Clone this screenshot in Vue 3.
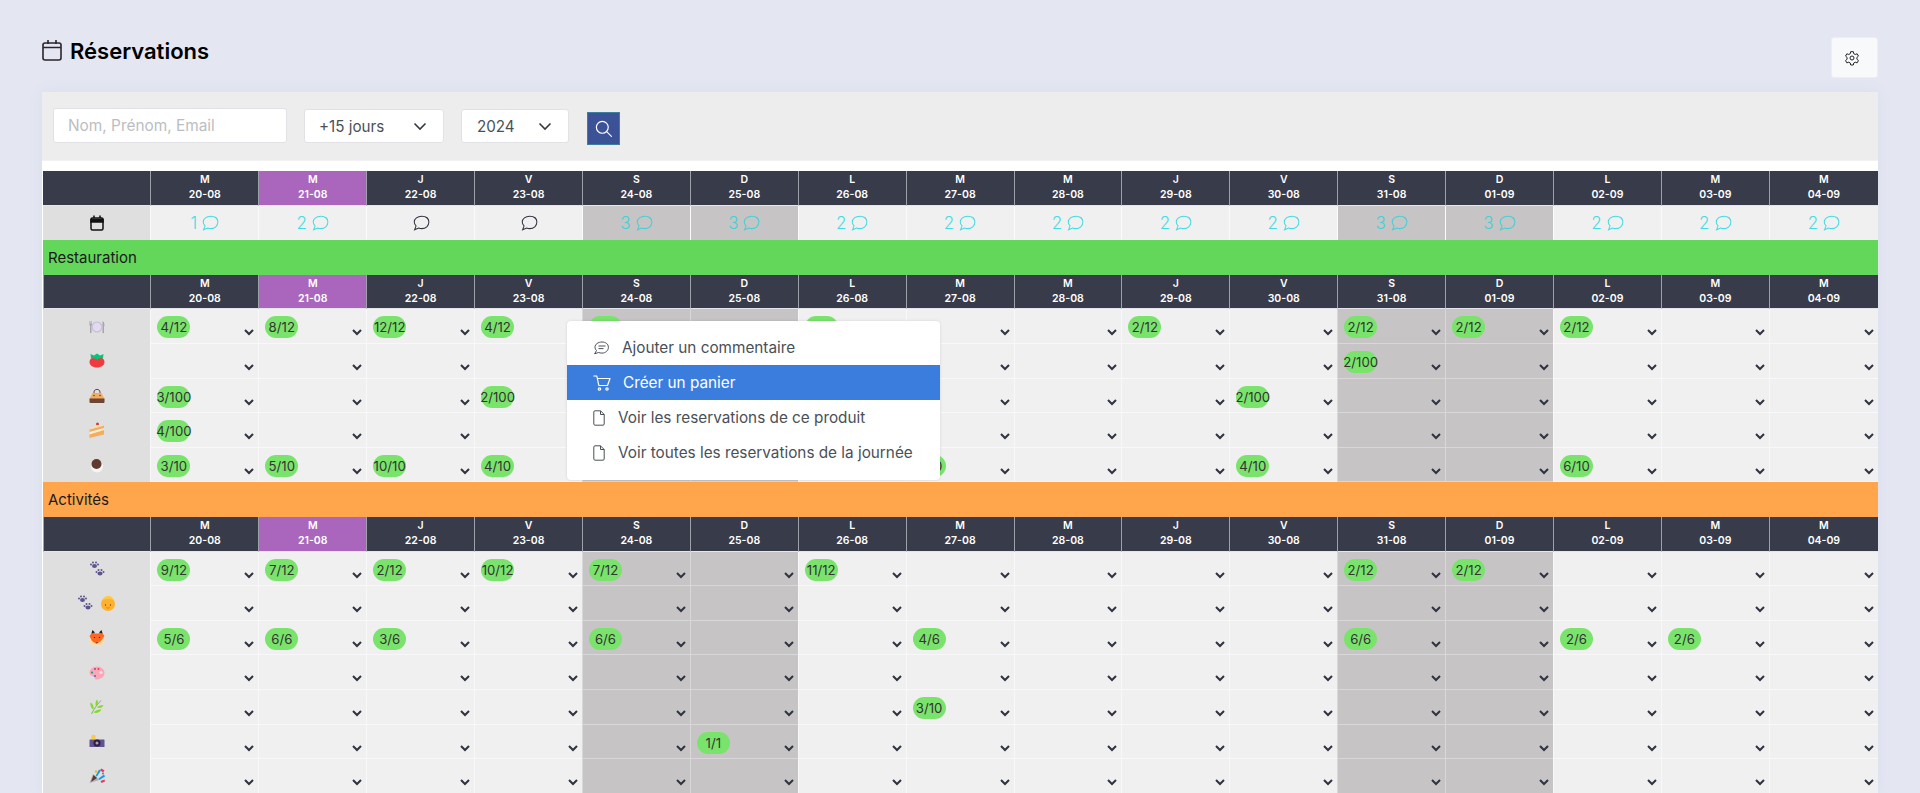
<template>
    <div class="page">
        <header class="page-head">
            <h1 class="page-title">
                <svg class="title-icon" viewBox="0 0 20 22" fill="none" stroke="#2b2528" stroke-width="1.6">
                    <rect x="1" y="4" width="18" height="17" rx="2" />
                    <path d="M1 8.500h18M6 1v4M14 1v4" />
                </svg>
                <span>Réservations</span>
            </h1>
            <button class="settings-btn">
                <svg viewBox="0 0 24 24" fill="none" stroke="#212529" stroke-width="1.500" stroke-linejoin="round">
                    <circle cx="12" cy="12" r="3" />
                    <path d="M10 2.500h4l.6 3 2.200 1.200 2.900-1 2 3.400-2.300 2v2.800l2.300 2-2 3.400-2.900-1-2.200 1.200-.6 3h-4l-.6-3-2.200-1.200-2.900 1-2-3.400 2.300-2v-2.800l-2.300-2 2-3.400 2.900 1 2.200-1.200z" />
                </svg>
            </button>
        </header>

        <section class="card">
            <div class="toolbar">
                <input class="search-input" type="text" placeholder="Nom, Prénom, Email" />
                <div class="fake-select range">
                    <span>+15 jours</span>
                    <svg viewBox="0 0 14 9" fill="none" stroke="#343a40" stroke-width="1.600"><path d="M1.500 1.500 7 7l5.500-5.500" /></svg>
                </div>
                <div class="fake-select year">
                    <span>2024</span>
                    <svg viewBox="0 0 14 9" fill="none" stroke="#343a40" stroke-width="1.600"><path d="M1.500 1.500 7 7l5.500-5.500" /></svg>
                </div>
                <button class="search-btn">
                    <svg viewBox="0 0 24 24" fill="none" stroke="#fff" stroke-width="1.500" stroke-linecap="round">
                        <circle cx="10.500" cy="10.500" r="7.500" />
                        <path d="m16 16 6 6" />
                    </svg>
                </button>
            </div>

            <div class="planning">
                <div class="head-cell"></div>
                <div v-for="d in days" :key="'top' + d.date" class="head-cell" :class="{ today: d.today }">
                    <span>{{ d.letter }}</span>
                    <span>{{ d.date }}</span>
                </div>

                <div class="label-cell">
                    <svg class="cal-icon" viewBox="0 0 14 16" fill="none" stroke="#111" stroke-width="1.500">
                        <rect x="1" y="3" width="12" height="12" rx="1.500" />
                        <path d="M1 4.500h12V7H1z" fill="#111" />
                        <path d="M4 .5V3M10 .5V3" />
                    </svg>
                </div>
                <div
                    v-for="(d, i) in days"
                    :key="'note' + d.date"
                    class="note-cell"
                    :class="{ weekend: d.weekend, filled: notes[i] }"
                >
                    <span v-if="notes[i]">{{ notes[i] }}</span>
                    <svg viewBox="0 0 16 14" fill="none" stroke="currentColor" stroke-width="0.9">
                        <path d="M8.600 1C4.900 1 2 3.300 2 6.200c0 1.300.6 2.500 1.600 3.400L2.300 13l3.600-1.500c.8.300 1.700.5 2.700.5 3.700 0 6.400-2.400 6.400-5.800S12.300 1 8.600 1z" />
                    </svg>
                </div>

                <template v-for="section in sections" :key="section.name">
                    <div class="section-title" :class="section.tone">{{ section.name }}</div>
                    <div class="head-cell"></div>
                    <div v-for="d in days" :key="section.name + d.date" class="head-cell" :class="{ today: d.today }">
                        <span>{{ d.letter }}</span>
                        <span>{{ d.date }}</span>
                    </div>

                    <template v-for="row in section.rows" :key="row.id">
                        <div class="label-cell">
                            <svg
                                v-for="icon in row.icons"
                                :key="icon"
                                class="emoji"
                                viewBox="0 0 32 32"
                                v-html="emojis[icon]"
                            ></svg>
                        </div>
                        <div
                            v-for="(d, i) in days"
                            :key="row.id + d.date"
                            class="slot"
                            :class="{ weekend: d.weekend }"
                        >
                            <span v-if="row.slots[i]" class="badge">{{ row.slots[i] }}</span>
                            <svg class="chevron" viewBox="0 0 10 7" fill="none" stroke="#2f3340" stroke-width="2">
                                <path d="m1 1 4 4 4-4" />
                            </svg>
                        </div>
                    </template>
                </template>
            </div>
        </section>

        <ul class="context-menu">
            <li class="menu-item comment">
                <svg viewBox="0 0 16 14" fill="none" stroke="#495057" stroke-width="1">
                    <path d="M9 1C5.200 1 2 3.200 2 6.200c0 1.300.6 2.400 1.500 3.300L1.600 12.800l3.900-1.300c1 .4 2.200.6 3.500.6 3.600 0 6.400-2.500 6.400-5.800S12.600 1 9 1z" />
                    <path d="M5.500 5h7M5.500 7.600h5" />
                </svg>
                Ajouter un commentaire
            </li>
            <li class="menu-item active">
                <svg viewBox="0 0 18 16" fill="none" stroke="#fff" stroke-width="1.200" stroke-linecap="round" stroke-linejoin="round">
                    <path d="M.8 1h3l2 9.500h8.700L17 3.500H4.400" />
                    <circle cx="6.500" cy="14" r="1.200" />
                    <circle cx="14" cy="14" r="1.200" />
                </svg>
                Créer un panier
            </li>
            <li class="menu-item file">
                <svg viewBox="0 0 12 16" fill="none" stroke="#495057" stroke-width="1" stroke-linejoin="round">
                    <path d="M7.500.8H2A1.300 1.300 0 0 0 .8 2v12c0 .7.600 1.200 1.200 1.200h8c.7 0 1.200-.5 1.200-1.200V4.500zM7.500.8v3.700h3.700" />
                </svg>
                Voir les reservations de ce produit
            </li>
            <li class="menu-item file">
                <svg viewBox="0 0 12 16" fill="none" stroke="#495057" stroke-width="1" stroke-linejoin="round">
                    <path d="M7.500.8H2A1.300 1.300 0 0 0 .8 2v12c0 .7.600 1.200 1.200 1.200h8c.7 0 1.200-.5 1.200-1.200V4.500zM7.500.8v3.700h3.700" />
                </svg>
                Voir toutes les reservations de la journée
            </li>
        </ul>
    </div>
</template>

<script setup>
const dayList = [
    ["M", "20-08"], ["M", "21-08"], ["J", "22-08"], ["V", "23-08"],
    ["S", "24-08"], ["D", "25-08"], ["L", "26-08"], ["M", "27-08"],
    ["M", "28-08"], ["J", "29-08"], ["V", "30-08"], ["S", "31-08"],
    ["D", "01-09"], ["L", "02-09"], ["M", "03-09"], ["M", "04-09"],
];
const days = dayList.map(([letter, date]) => ({
    letter,
    date,
    today: date === "21-08",
    weekend: letter === "S" || letter === "D",
}));

const notes = [1, 2, 0, 0, 3, 3, 2, 2, 2, 2, 2, 3, 3, 2, 2, 2];

// une case par jour, "" = pas de reservation
const sections = [
    {
        name: "Restauration",
        tone: "green",
        rows: [
            { id: "r1", icons: ["plate"], slots: ["4/12", "8/12", "12/12", "4/12", "9/12", "", "2/12", "", "", "2/12", "", "2/12", "2/12", "2/12", "", ""] },
            { id: "r2", icons: ["tomato"], slots: ["", "", "", "", "", "", "", "", "", "", "", "2/100", "", "", "", ""] },
            { id: "r3", icons: ["bag"], slots: ["3/100", "", "", "2/100", "", "", "", "", "", "", "2/100", "", "", "", "", ""] },
            { id: "r4", icons: ["cake"], slots: ["4/100", "", "", "", "", "", "", "", "", "", "", "", "", "", "", ""] },
            { id: "r5", icons: ["coffee"], slots: ["3/10", "5/10", "10/10", "4/10", "", "", "", "3/10", "", "", "4/10", "", "", "6/10", "", ""] },
        ],
    },
    {
        name: "Activités",
        tone: "orange",
        rows: [
            { id: "a1", icons: ["paws"], slots: ["9/12", "7/12", "2/12", "10/12", "7/12", "", "11/12", "", "", "", "", "2/12", "2/12", "", "", ""] },
            { id: "a2", icons: ["paws", "baby"], slots: Array(16).fill("") },
            { id: "a3", icons: ["fox"], slots: ["5/6", "6/6", "3/6", "", "6/6", "", "", "4/6", "", "", "", "6/6", "", "2/6", "2/6", ""] },
            { id: "a4", icons: ["palette"], slots: Array(16).fill("") },
            { id: "a5", icons: ["herb"], slots: ["", "", "", "", "", "", "", "3/10", "", "", "", "", "", "", "", ""] },
            { id: "a6", icons: ["camera"], slots: ["", "", "", "", "", "1/1", "", "", "", "", "", "", "", "", "", ""] },
            { id: "a7", icons: ["party"], slots: Array(16).fill("") },
        ],
    },
];

const emojis = {
    plate: '<path d="M1 4h1v5h1V4h1v5h1V4h1v8l-1 2v13a1.500 1.500 0 0 1-3 0V14l-1-2z" fill="#a8a4ae"/><path d="M27 4c3 1 4 5 4 10h-1v13a1.500 1.500 0 0 1-3 0z" fill="#a8a4ae"/><circle cx="16" cy="16" r="11" fill="#c8c0d8"/><circle cx="16" cy="16" r="8.500" fill="#e2daf0"/>',
    tomato: '<path d="M16 10c9-3 15 2 15 8 0 6-6 11-15 11S1 24 1 18c0-6 6-11 15-8z" fill="#f03a3f"/><path d="M3 2l7 3 6-4 6 4 7-3-1 9-5-1-7 3-7-3-5 1z" fill="#00c77a"/>',
    bag: '<path d="M10 14V8c0-7 12-7 12 0v6" fill="none" stroke="#6d4534" stroke-width="2"/><path d="M7 10h18l6 12H1z" fill="#f3ad61"/><path d="M1 21h30v7a2 2 0 0 1-2 2H3a2 2 0 0 1-2-2z" fill="#6d4534"/><circle cx="10" cy="15" r="1.600" fill="#6d4534"/><circle cx="22" cy="15" r="1.600" fill="#6d4534"/>',
    cake: '<circle cx="17" cy="4" r="3" fill="#e0392f"/><path d="M1 15 30 7v18L1 32z" fill="#f3ad61"/><path d="M1 15 17 6l13 1z" fill="#ffdfa8"/><path d="M1 20 30 12v4L1 25z" fill="#fff0d2"/>',
    coffee: '<circle cx="16" cy="19" r="12" fill="#f6f4f4"/><circle cx="15" cy="14" r="10" fill="#5f3a2e"/>',
    paws: '<g fill="#5f5490"><ellipse cx="11" cy="10" rx="5" ry="4"/><circle cx="4" cy="7" r="2"/><circle cx="8" cy="3" r="2"/><circle cx="14" cy="3" r="2"/><circle cx="18" cy="7" r="2"/><ellipse cx="22" cy="25" rx="5" ry="4"/><circle cx="15" cy="22" r="2"/><circle cx="19" cy="18" r="2"/><circle cx="25" cy="18" r="2"/><circle cx="29" cy="22" r="2"/></g>',
    baby: '<circle cx="16" cy="18" r="14" fill="#ffb02e"/><path d="M6 10C8 0 25-1 27 10c-6-3-14-3-21 0z" fill="#ffc83d"/><circle cx="11" cy="20" r="1.300" fill="#6b4a1d"/><circle cx="21" cy="20" r="1.300" fill="#6b4a1d"/><path d="M13 25c2 1.500 4 1.500 6 0" stroke="#9b5a1f" fill="none"/>',
    fox: '<ellipse cx="16" cy="23" rx="15" ry="9" fill="#ffdea7"/><path d="M1 12 7 4l6 3h6l6-3 6 8-7 10-9 6-9-6z" fill="#ff6723"/><path d="M5 7 7 0l5 5zM20 5l5-5 2 7z" fill="#1c1c1c"/><circle cx="11" cy="15" r="1.200" fill="#1c1c1c"/><circle cx="21" cy="15" r="1.200" fill="#1c1c1c"/><path d="M14.500 24h3L16 27z" fill="#402a32"/>',
    palette: '<path d="M16 3C7 3 1 9 1 16c0 5 5 6 8 7 3 1 2 7 7 6 9-1 15-6 15-13S25 3 16 3z" fill="#f9a8b8"/><circle cx="24" cy="15" r="3" fill="#ffe0e4"/><circle cx="12" cy="8" r="2" fill="#a83cb0"/><circle cx="6" cy="15" r="2" fill="#00a06a"/><circle cx="12" cy="22" r="2" fill="#6a5acd"/><circle cx="19" cy="8" r="1.800" fill="#f8312f"/>',
    herb: '<path d="M5 30C9 22 15 12 24 3" stroke="#5aa83a" stroke-width="1.500" fill="none"/><path d="M7 20C3 16 2 11 3 7c5 2 7 8 6 13zM14 14c-2-4-1-9 2-13 3 4 2 9 0 13zM9 27c4-5 10-7 16-6-3 6-10 8-16 6zM16 17c3-4 8-5 13-4-3 5-8 6-13 4z" fill="#86d72f"/>',
    camera: '<circle cx="9" cy="6" r="4.500" fill="#ffc83d"/><rect x="1" y="11" width="30" height="15" rx="1" fill="#5f5490"/><circle cx="16" cy="18" r="7" fill="#321b41"/><circle cx="16" cy="18" r="3" fill="#a8a4ae"/>',
    party: '<path d="M1 30 8 12l13 12z" fill="#b4acbc"/><path d="M4 28 9 14l7 6z" fill="#5f3a2e"/><path d="M13 16 20 3l4 2-8 12zM19 21l11-8 2 4-11 7z" fill="#00a6ed"/><path d="M25 1l6 4-3 4-6-5zM23 26l8-3 1 4-7 3z" fill="#f92f60"/><circle cx="14" cy="7" r="2.500" fill="#ffb02e"/><circle cx="28" cy="11" r="2" fill="#8d65c5"/>',
};
</script>

<style scoped>
.page {
    position: relative;
    height: 793px;
    overflow: hidden;
    box-sizing: border-box;
    padding: 37px 42px 0;
    background-color: #e4e7f2;
    font-family: Inter, "Noto Sans", sans-serif;
    color: #000;
}

.page-head {
    display: flex;
    justify-content: space-between;
    align-items: flex-start;
    height: 41px;
    margin-bottom: 14px;
}

.page-title {
    display: flex;
    align-items: center;
    gap: 8px;
    margin: 1px 0 0;
    height: 24px;
    font-size: 22px;
    font-weight: 600;
    line-height: 24px;
}

.page-title span {
    margin-top: 1px;
}

.title-icon {
    width: 20px;
    height: 22px;
}

.settings-btn {
    display: flex;
    align-items: center;
    justify-content: center;
    width: 47px;
    height: 41px;
    padding: 0 6px 0 0;
    border: 1px solid #eceef3;
    border-radius: 3px;
    background-color: #f8f9fb;
}

.settings-btn svg {
    width: 16px;
    height: 16px;
}

.card {
    background-color: #fff;
    box-shadow: 0 0 14px rgba(120, 130, 170, 0.08);
}

.toolbar {
    display: flex;
    align-items: flex-start;
    box-sizing: border-box;
    height: 69px;
    padding: 16px 0 0 11px;
    background-color: #ededed;
    border-bottom: 1px solid #f2f2f2;
}

.search-input {
    box-sizing: border-box;
    width: 234px;
    height: 35px;
    padding: 0 14px;
    border: 1px solid #e2e2e6;
    border-radius: 3px;
    background-color: #fff;
    font-family: inherit;
    font-size: 15.4px;
    outline: none;
}

.search-input::placeholder {
    color: #bcbdc2;
}

.fake-select {
    display: flex;
    align-items: center;
    justify-content: space-between;
    box-sizing: border-box;
    height: 34px;
    margin-top: 1px;
    padding: 0 16px 0 15px;
    border: 1px solid #e2e2e6;
    border-radius: 3px;
    background-color: #fff;
    color: #495057;
    font-size: 15.2px;
}

.fake-select svg {
    width: 14px;
    height: 9px;
}

.range {
    width: 140px;
    margin-left: 17px;
    padding-left: 14px;
}

.year {
    width: 108px;
    margin-left: 17px;
}

.search-btn {
    display: flex;
    align-items: center;
    justify-content: center;
    box-sizing: border-box;
    width: 33px;
    height: 33px;
    margin: 4px 0 0 18px;
    padding: 0;
    border: 1px solid #3d7f9f;
    background-color: #3c5297;
}

.search-btn svg {
    width: 19px;
    height: 19px;
}

.planning {
    display: grid;
    grid-template-columns: 107.4px repeat(15, 107.9px) 1fr;
    grid-auto-rows: 34.6px;
    padding: 10px 0 0 1px;
}

.head-cell {
    display: flex;
    flex-direction: column;
    align-items: center;
    justify-content: center;
    box-sizing: border-box;
    border-left: 1px solid #9ea0aa;
    border-bottom: 1px solid #e6e6ea;
    background-color: #383b4a;
    color: #fff;
    font-size: 10.5px;
    font-weight: 600;
    line-height: 14.500px;
}

.head-cell:first-child {
    border-left: none;
}

.head-cell.today {
    background-color: #aa66bd;
}

.label-cell {
    display: flex;
    align-items: center;
    justify-content: center;
    gap: 7px;
    background-color: #dfdfdf;
}

.cal-icon {
    width: 14px;
    height: 16px;
}

.emoji {
    width: 16px;
    height: 16px;
}

.note-cell {
    display: flex;
    align-items: center;
    justify-content: center;
    gap: 4px;
    box-sizing: border-box;
    border-left: 1px solid #fbfbfb;
    background-color: #f0f0f0;
    color: #2f3340;
    font-size: 17px;
    font-weight: 300;
}

.note-cell svg {
    width: 18px;
    height: 16px;
}

.note-cell.filled {
    color: #45dbe0;
}

.note-cell.weekend {
    background-color: #c6c4c4;
    color: #45cfd4;
}

.section-title {
    grid-column: 1 / -1;
    display: flex;
    align-items: center;
    padding-left: 5px;
    font-size: 15px;
    color: #1a1a1a;
}

.section-title.green {
    background-color: #63d75a;
}

.section-title.orange {
    background-color: #ffa64d;
}

.slot {
    display: flex;
    justify-content: space-between;
    box-sizing: border-box;
    padding: 7px 4px 0 6px;
    border-left: 1px solid #f8f8f8;
    border-bottom: 1px solid #f8f8f8;
    background-color: #f0f0f0;
}

.slot.weekend {
    border-color: #d9d8d8;
    background-color: #c6c4c4;
}

.badge {
    flex: none;
    display: flex;
    justify-content: center;
    width: 33px;
    height: 22px;
    border-radius: 11px;
    background-color: #7ae36c;
    color: #333;
    font-size: 13.2px;
    line-height: 22px;
    white-space: nowrap;
}

.chevron {
    flex: none;
    width: 10px;
    height: 7px;
    margin: 13px 0 0 auto;
}

.context-menu {
    position: absolute;
    top: 321px;
    left: 567px;
    box-sizing: border-box;
    width: 373px;
    height: 159px;
    margin: 0;
    padding: 9px 0 0;
    list-style: none;
    border-radius: 4px;
    background-color: #fff;
    box-shadow: 0 0 3px rgba(0, 0, 0, 0.12);
    color: #495057;
    font-size: 15.3px;
}

.menu-item {
    display: flex;
    align-items: center;
    height: 35px;
    padding-left: 26px;
}

.menu-item.comment svg {
    width: 16px;
    height: 14px;
    margin-right: 13px;
}

.menu-item.active {
    background-color: #3b7ddd;
    color: #fff;
}

.menu-item.active svg {
    width: 18px;
    height: 16px;
    margin-right: 12px;
}

.menu-item.file svg {
    width: 12px;
    height: 16px;
    margin-right: 13px;
}
</style>

<style>
body {
    overflow: hidden;
}
</style>
